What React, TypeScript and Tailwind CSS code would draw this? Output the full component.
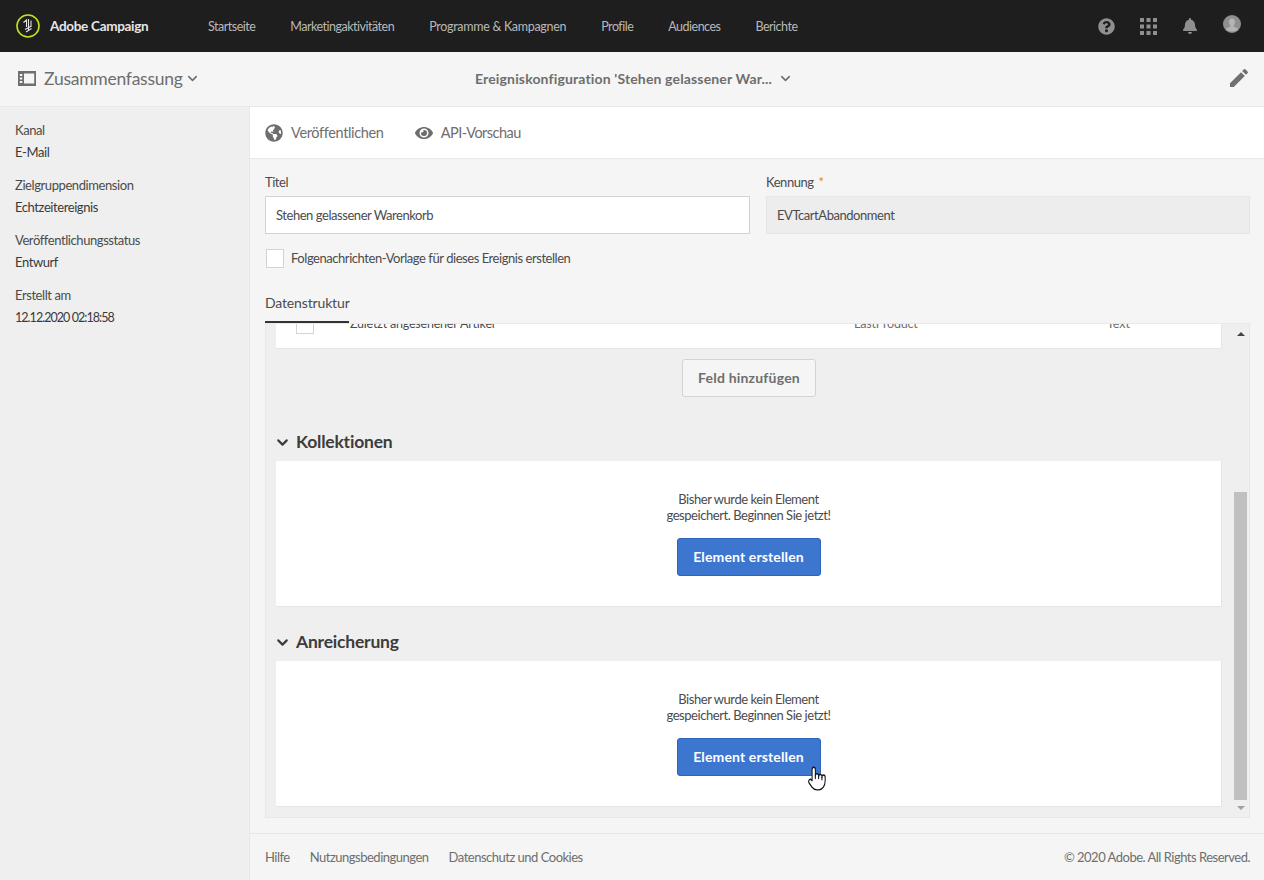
import { ChevronDown } from "lucide-react";
import { FaBell, FaEye, FaGlobeAmericas, FaQuestionCircle } from "react-icons/fa";
import { MdEdit } from "react-icons/md";

const nav = ["Startseite", "Marketingaktivitäten", "Programme & Kampagnen", "Profile", "Audiences", "Berichte"];

const meta = [
  ["Kanal", "E-Mail"],
  ["Zielgruppendimension", "Echtzeitereignis"],
  ["Veröffentlichungsstatus", "Entwurf"],
  ["Erstellt am", "12.12.2020 02:18:58"],
];

function Logo() {
  return (
    <svg width="24" height="24" viewBox="0 0 24 24" fill="none">
      <circle cx="12" cy="12" r="11" stroke="#c6e01e" strokeWidth="1.6" />
      <path
        d="M7.500 8.500L10.500 6v7M12.500 5v11M15 6.500V13M9 15.500l6.500-3.500M10 18l5.500-3.500"
        stroke="#e4e4e4"
        strokeWidth="1.100"
      />
    </svg>
  );
}

function SidebarIcon() {
  return (
    <svg width="18" height="15" viewBox="0 0 18 15" fill="#6e6e6e">
      <path d="M0 0h18v15H0zM6 2.500v10h10.200v-10zM1.800 3v2h2.500V3zM1.800 6.500v2h2.500v-2zM1.800 10v2h2.500v-2z" fillRule="evenodd" />
    </svg>
  );
}

function GridIcon() {
  return (
    <svg width="17" height="17" viewBox="0 0 17 17" fill="#8f8f8f">
      {[0, 6.5, 13].map((y) => [0, 6.5, 13].map((x) => <rect key={`${x}-${y}`} x={x} y={y} width="4" height="4" />))}
    </svg>
  );
}

function Avatar() {
  return (
    <svg width="18" height="18" viewBox="0 0 18 18">
      <circle cx="9" cy="9" r="9" fill="#8f8f8f" />
      <path d="M9 3.500c1.900 0 3 1.500 3 3.500 0 1.400-.6 2.600-1.400 3.200v1.200l3.400 1.600c.5.300.8.800.8 1.300A8.600 8.600 0 0 1 3.200 14.300c0-.5.300-1 .8-1.300l3.400-1.600v-1.200C6.600 9.600 6 8.400 6 7c0-2 1.100-3.500 3-3.500z" fill="#b4b4b4" />
    </svg>
  );
}

function HandCursor() {
  return (
    <svg
      width="18"
      height="25"
      viewBox="1 1 22 22"
      preserveAspectRatio="none"
      fill="none"
      stroke="#151515"
      strokeWidth="1.300"
      strokeLinecap="round"
      strokeLinejoin="round"
      className="absolute left-[131px] top-[28px]"
    >
      <path
        d="M6 14V4a2 2 0 0 1 4 0v5.500a2 2 0 0 1 4 .5a2 2 0 0 1 4 1a2 2 0 0 1 4 0v3a8 8 0 0 1-8 8h-2c-2.800 0-4.500-.86-5.990-2.340l-3.600-3.600a2 2 0 0 1 2.830-2.820z"
        fill="#fff"
      />
      <path d="M10 9.500V12M14 10v2M18 11v2" />
    </svg>
  );
}

function EmptyCard({ hand }: { hand?: boolean }) {
  return (
    <div className="flex h-[146px] flex-col items-center rounded-[2px] border-b border-r border-[#e4e4e4] bg-white pt-[30px]">
      <p className="text-center text-[13px] leading-[16px] tracking-[-0.45px] text-[#4b4b4b]">
        Bisher wurde kein Element
        <br />
        gespeichert. Beginnen Sie jetzt!
      </p>
      <div className="relative mt-[15px]">
        <button className="h-[38px] w-[144px] rounded-[3px] border border-[#2b64b8] bg-[#3d76cf] text-[14px] font-bold tracking-[0.13px] text-white">
          Element erstellen
        </button>
        {hand && <HandCursor />}
      </div>
    </div>
  );
}

function SectionTitle({ title }: { title: string }) {
  return (
    <div className="-ml-[2px] flex h-[40px] items-center gap-[6px] pt-[3px]">
      <ChevronDown size={17} strokeWidth={3} className="text-[#3c3c3c]" />
      <h2 className="-ml-[1px] text-[17.500px] font-bold tracking-[-0.2px] text-[#3c3c3c]">{title}</h2>
    </div>
  );
}

export default function App() {
  return (
    <div className="flex h-[880px] w-[1264px] flex-col overflow-hidden bg-[#f5f5f5] font-['Lato',sans-serif] text-[#4b4b4b]">
      <header className="flex h-[52px] shrink-0 items-center bg-[#1e1e1e]">
        <div className="ml-[16px] flex w-[192px] items-center gap-[10px]">
          <Logo />
          <span className="text-[13.500px] font-bold tracking-[-0.3px] text-[#e6e6e6]">Adobe Campaign</span>
        </div>
        <nav className="mt-[3px] flex gap-[35px] text-[12.500px] tracking-[-0.5px] text-[#b9b9b9]">
          {nav.map((item) => (
            <a key={item} className={item.includes("&") ? "tracking-[-0.3px]" : ""}>
              {item}
            </a>
          ))}
        </nav>
        <div className="ml-auto mr-[23px] flex items-center gap-[25px]">
          <FaQuestionCircle size={17} className="text-[#8f8f8f]" />
          <GridIcon />
          <FaBell size={16} className="text-[#8f8f8f]" />
          <div className="-mt-[4px]">
            <Avatar />
          </div>
        </div>
      </header>

      <div className="flex h-[55px] shrink-0 items-center border-b border-[#e8e8e8] bg-[#f5f5f5] pb-[2px] pl-[18px] pr-[18px]">
        <div className="flex w-[250px] items-center gap-[8px]">
          <SidebarIcon />
          <span className="mt-[3px] text-[17.500px] tracking-[-0.25px] text-[#6e6e6e]">Zusammenfassung</span>
          <ChevronDown size={15} strokeWidth={2.5} className="-ml-[6px] text-[#6e6e6e]" />
        </div>
        <div className="ml-[207px] flex items-center gap-[6px]">
          <span className="text-[14px] font-bold tracking-[0.15px] text-[#6e6e6e]">Ereigniskonfiguration 'Stehen gelassener War...</span>
          <ChevronDown size={15} strokeWidth={2.5} className="text-[#6e6e6e]" />
        </div>
        <MdEdit size={24} className="-mr-[5px] ml-auto text-[#707070]" />
      </div>

      <div className="flex min-h-0 flex-1">
        <aside className="w-[250px] shrink-0 border-r border-[#e8e8e8] bg-[#efefef] pl-[15px] pt-[12px]">
          {meta.map(([label, value]) => (
            <div key={label} className="mb-[11px] text-[13px] leading-[22px] tracking-[-0.42px] text-[#4b4b4b]">
              <div>{label}</div>
              <div className={label === "Erstellt am" ? "pt-[1px] text-[12.500px] tracking-[-0.95px] text-[#3a3a3a]" : "text-[#3a3a3a]"}>{value}</div>
            </div>
          ))}
        </aside>

        <main className="flex min-w-0 flex-1 flex-col">
          <div className="flex h-[52px] shrink-0 items-center gap-[31px] border-b border-[#e8e8e8] bg-white pl-[15px] text-[14.500px] tracking-[-0.35px] text-[#6e6e6e]">
            <div className="flex items-center gap-[8px]">
              <FaGlobeAmericas size={18} />
              <span>Veröffentlichen</span>
            </div>
            <div className="flex items-center gap-[8px]">
              <FaEye size={18} />
              <span className="tracking-[-0.5px]">API-Vorschau</span>
            </div>
          </div>

          <div className="flex min-h-0 flex-1 flex-col pl-[15px] pr-[14px] pt-[15px] text-[13px] tracking-[-0.45px]">
            <div className="flex gap-[16px]">
              <label className="w-[485px]">
                <div className="mb-[5px] leading-[17px]">Titel</div>
                <div className="flex h-[38px] items-center border border-[#d3d3d3] bg-white px-[10px] pt-[1px]">
                  Stehen gelassener Warenkorb
                </div>
              </label>
              <label className="flex-1">
                <div className="mb-[5px] leading-[17px]">
                  Kennung <span className="ml-[2px] text-[#e68619]">*</span>
                </div>
                <div className="flex h-[38px] items-center border border-[#e6e6e6] bg-[#ededed] px-[10px] pt-[1px]">
                  EVTcartAbandonment
                </div>
              </label>
            </div>

            <div className="mt-[15px] flex items-center gap-[7px] pl-[1px]">
              <span className="h-[19px] w-[18px] border border-[#d3d3d3] bg-white" />
              Folgenachrichten-Vorlage für dieses Ereignis erstellen
            </div>

            <div className="mt-[25px] h-[29px] text-[14px] leading-[18px] tracking-[-0.15px]">
              <span className="inline-block h-[29px] w-[84px] whitespace-nowrap border-b-[2px] border-[#333]">Datenstruktur</span>
            </div>

            <div className="flex h-[495px] border border-[#e8e8e8] bg-[#efefef] tracking-normal">
              <div className="min-w-0 flex-1 pl-[10px] pr-[12px]">
                <div className="h-[25px] overflow-hidden rounded-b-[2px] border-b border-r border-[#e4e4e4] bg-white text-[12.500px] text-[#6e6e6e]">
                  <div className="-mt-[8px] flex h-[18px] items-center">
                    <span className="ml-[20px] h-[18px] w-[18px] shrink-0 border border-[#d3d3d3]" />
                    <span className="ml-[36px] w-[504px] tracking-[-0.2px] text-[#4b4b4b]">Zuletzt angesehener Artikel</span>
                    <span className="w-[253px] tracking-[-0.2px]">LastProduct</span>
                    <span>Text</span>
                  </div>
                </div>
                <div className="flex justify-center pt-[10px]">
                  <button className="h-[38px] w-[134px] rounded-[3px] border border-[#d3d3d3] bg-[#f5f5f5] text-[14px] font-bold tracking-[0.2px] text-[#6e6e6e]">
                    Feld hinzufügen
                  </button>
                </div>
                <div className="mt-[24px]">
                  <SectionTitle title="Kollektionen" />
                </div>
                <EmptyCard />
                <div className="mt-[14px]">
                  <SectionTitle title="Anreicherung" />
                </div>
                <EmptyCard hand />
              </div>
              <div className="flex w-[15px] shrink-0 flex-col items-center pr-[2px]">
                <span className="mt-[8px] h-0 w-0 border-x-[4px] border-b-[4px] border-x-transparent border-b-[#444]" />
                <div className="mt-[156px] h-[308px] w-[13px] bg-[#c0c0c0]" />
                <span className="mt-[6px] h-0 w-0 border-x-[4px] border-t-[4px] border-x-transparent border-t-[#a0a0a0]" />
              </div>
            </div>
          </div>

          <footer className="flex h-[47px] shrink-0 items-center border-t border-[#e8e8e8] pl-[15px] pr-[14px] pt-[1px] text-[13px] tracking-[-0.5px] text-[#6e6e6e]">
            <div className="flex gap-[20px]">
              <a>Hilfe</a>
              <a>Nutzungsbedingungen</a>
              <a>Datenschutz und Cookies</a>
            </div>
            <span className="ml-auto">© 2020 Adobe. All Rights Reserved.</span>
          </footer>
        </main>
      </div>
    </div>
  );
}
